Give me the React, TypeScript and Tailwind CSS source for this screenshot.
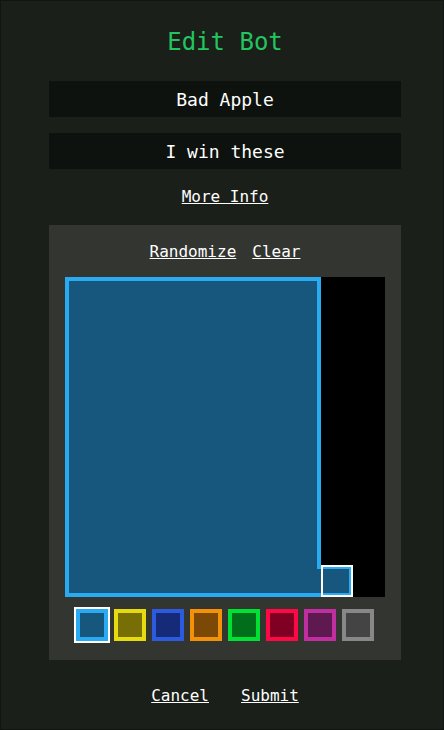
import React, { useState } from "react";

const swatches = [
  { border: "border-[#29abf4]", fill: "bg-[#17577e]" },
  { border: "border-[#e6db0c]", fill: "bg-[#776f05]" },
  { border: "border-[#2c5be0]", fill: "bg-[#152b78]" },
  { border: "border-[#f39208]", fill: "bg-[#7b4905]" },
  { border: "border-[#00e233]", fill: "bg-[#006e1b]" },
  { border: "border-[#ff0846]", fill: "bg-[#7f0022]" },
  { border: "border-[#bf2fa1]", fill: "bg-[#5f1951]" },
  { border: "border-[#888888]", fill: "bg-[#444444]" },
];

// Bot shape drawn on a 10x10 grid of 32px cells
function BotCanvas() {
  return (
    <svg width="320" height="320" viewBox="0 0 320 320" className="block">
      <rect x="0" y="0" width="320" height="320" fill="#000000" />
      <path d="M0 0 H256 V288 H288 V320 H0 Z" fill="#17577e" />
      <path
        d="M2 2 H254 V290 H286 V318 H2 Z"
        fill="none"
        stroke="#29abf4"
        strokeWidth="4"
        strokeLinejoin="miter"
      />
      <rect x="257" y="289" width="30" height="30" fill="none" stroke="#ffffff" strokeWidth="2" />
    </svg>
  );
}

export default function App() {
  const [selected, setSelected] = useState(0);

  return (
    <main
      className="flex h-[730px] w-full flex-col items-center border border-[#111511] bg-[#1a1f1a] pl-[6px] text-white"
      style={{ fontFamily: '"DejaVu Sans Mono", "Liberation Mono", monospace' }}
    >
      <h1 className="mt-[25px] h-8 text-2xl leading-8 text-[#22c55e]">Edit Bot</h1>

      <input
        defaultValue="Bad Apple"
        className="mt-[23px] h-9 w-[352px] bg-[#0e120e] text-center text-lg text-white outline-none"
      />
      <input
        defaultValue="I win these"
        className="mt-4 h-9 w-[352px] bg-[#0e120e] text-center text-lg text-white outline-none"
      />

      <button type="button" className="mt-[16px] text-base leading-6 text-white underline">
        More Info
      </button>

      {/* Editor panel */}
      <section className="mt-[16px] flex w-[352px] flex-col items-center bg-[#323530] pb-[19px] pt-[15px]">
        <div className="flex gap-4 text-base leading-6">
          <button type="button" className="underline">
            Randomize
          </button>
          <button type="button" className="underline">
            Clear
          </button>
        </div>

        <div className="mt-[13px]">
          <BotCanvas />
        </div>

        <div className="mt-3 flex gap-[6px]">
          {swatches.map((s, i) => (
            <button
              key={i}
              type="button"
              onClick={() => setSelected(i)}
              className={`h-8 w-8 border-4 ${s.border} ${s.fill} ${
                selected === i ? "outline-2 outline-white" : ""
              }`}
            />
          ))}
        </div>
      </section>

      <div className="mt-[24px] flex gap-8 text-base leading-6">
        <button type="button" className="underline">
          Cancel
        </button>
        <button type="button" className="underline">
          Submit
        </button>
      </div>
    </main>
  );
}
